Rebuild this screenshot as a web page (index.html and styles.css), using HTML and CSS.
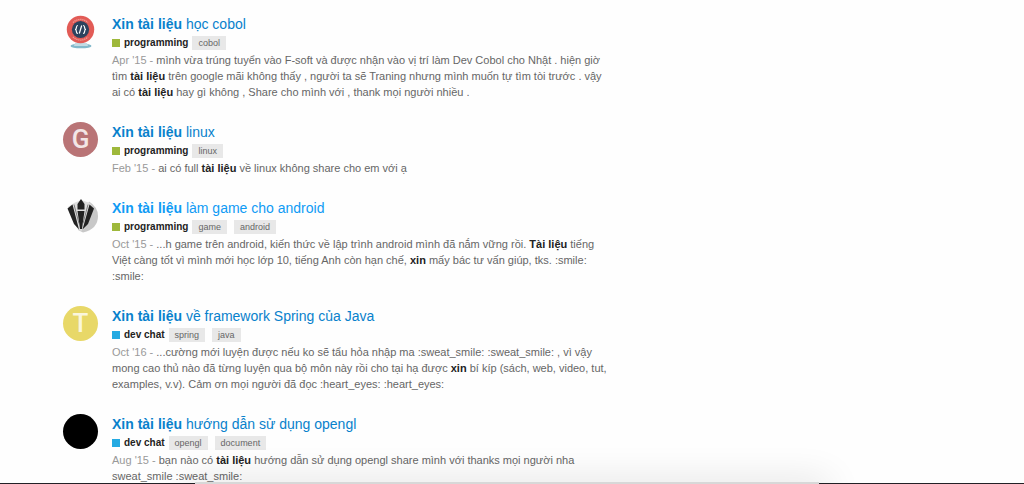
FILE: index.html
```html
<!DOCTYPE html>
<html lang="vi">
  <head>
    <meta charset="UTF-8" />
    <meta name="viewport" content="width=device-width, initial-scale=1.0" />
    <title>Xin tài liệu</title>
    <link rel="stylesheet" href="styles.css">
  </head>
  <body>
    <main class="results">
      <article class="result">
        <a class="avatar" href="#" aria-label="avatar">
          <svg viewBox="0 0 35 35">
            <ellipse cx="18" cy="32" rx="10.5" ry="2.3" fill="#83b9cb" />
            <path d="M12 29h12l1 3H11z" fill="#c3dbe3" />
            <circle cx="17.5" cy="15.5" r="13.7" fill="#e25b56" />
            <path d="M10 8.500a10.800 10.800 0 0 1 15 0M10 23a10.800 10.800 0 0 0 15 0" fill="none" stroke="#f0a09a" stroke-width="1.3" stroke-dasharray="1.2 .8" />
            <circle cx="17.5" cy="15.5" r="8.6" fill="#2c435e" />
            <path d="M15 11.5q-1.6 0-1.6 2t-1.4 2q1.4 0 1.4 2t1.6 2M20 11.5q1.6 0 1.6 2t1.4 2q-1.4 0-1.4 2t-1.6 2M18.7 11.5l-2.4 8" fill="none" stroke="#fff" stroke-width="1.2" />
          </svg>
        </a>
        <div class="content">
          <h2 class="title"><a href="#"><b>Xin tài liệu</b> học cobol</a></h2>
          <div class="meta">
            <a class="category" href="#">programming</a>
            <a class="tag" href="#">cobol</a>
          </div>
          <p class="excerpt"><time>Apr '15 -</time> mình vừa trúng tuyển vào F-soft và được nhận vào vị trí làm Dev Cobol cho Nhật . hiện giờ tìm <b>tài liệu</b> trên google mãi không thấy , người ta sẽ Traning nhưng mình muốn tự tìm tòi trước . vậy ai có <b>tài liệu</b> hay gì không , Share cho mình với , thank mọi người nhiều .</p>
        </div>
      </article>

      <article class="result">
        <a class="avatar letter rose" href="#">G</a>
        <div class="content">
          <h2 class="title"><a href="#"><b>Xin tài liệu</b> linux</a></h2>
          <div class="meta">
            <a class="category" href="#">programming</a>
            <a class="tag" href="#">linux</a>
          </div>
          <p class="excerpt"><time>Feb '15 -</time> ai có full <b>tài liệu</b> về linux không share cho em với ạ</p>
        </div>
      </article>

      <article class="result">
        <a class="avatar" href="#" aria-label="avatar">
          <svg viewBox="0 0 35 35">
            <path d="M26 3.500Q35 9 35 18Q35 31 20 34.500L15 32z" fill="#c8c8c8" />
            <path d="M5 9l6-4 7-3 9 3 3 5-8 20-4 3-4-3z" fill="#dedede" />
            <path d="M18 1l3.500 5v5.500h-7V6zM14.500 13h7L19 31h-2z" fill="#222" />
            <path d="M4.500 10.500L9.500 6.500l6.500 25L11 26zM31 10.500L26.500 6.500l-7 25 5.500-5.500z" fill="#222" />
            <path d="M11 6.500l5 19M25 6.500l-5 19" stroke="#666" stroke-width=".8" />
          </svg>
        </a>
        <div class="content">
          <h2 class="title active"><a href="#"><b>Xin tài liệu</b> làm game cho android</a></h2>
          <div class="meta">
            <a class="category" href="#">programming</a>
            <a class="tag" href="#">game</a>
            <a class="tag" href="#">android</a>
          </div>
          <p class="excerpt"><time>Oct '15 -</time> ...h game trên android, kiến thức về lập trình android mình đã nắm vững rồi. <b>Tài liệu</b> tiếng Việt càng tốt vì mình mới học lớp 10, tiếng Anh còn hạn chế, <b>xin</b> mấy bác tư vấn giúp, tks. :smile: :smile:</p>
        </div>
      </article>

      <article class="result">
        <a class="avatar letter yellow" href="#">T</a>
        <div class="content">
          <h2 class="title"><a href="#"><b>Xin tài liệu</b> về framework Spring của Java</a></h2>
          <div class="meta">
            <a class="category chat" href="#">dev chat</a>
            <a class="tag" href="#">spring</a>
            <a class="tag" href="#">java</a>
          </div>
          <p class="excerpt"><time>Oct '16 -</time> ...cường mới luyện được nếu ko sẽ tẩu hỏa nhập ma :sweat_smile: :sweat_smile: , vì vậy mong cao thủ nào đã từng luyện qua bộ môn này rồi cho tại hạ được <b>xin</b> bí kíp (sách, web, video, tut, examples, v.v). Cảm ơn mọi người đã đọc :heart_eyes: :heart_eyes:</p>
        </div>
      </article>

      <article class="result">
        <a class="avatar black" href="#" aria-label="avatar"></a>
        <div class="content">
          <h2 class="title"><a href="#"><b>Xin tài liệu</b> hướng dẫn sử dụng opengl</a></h2>
          <div class="meta">
            <a class="category chat" href="#">dev chat</a>
            <a class="tag" href="#">opengl</a>
            <a class="tag" href="#">document</a>
          </div>
          <p class="excerpt"><time>Aug '15 -</time> bạn nào có <b>tài liệu</b> hướng dẫn sử dụng opengl share mình với thanks mọi người nha sweat_smile :sweat_smile:</p>
        </div>
      </article>
    </main>

    <div class="bottom-edge"><div class="dock"></div></div>
  </body>
</html>
```

FILE: styles.css
```css
body {
  margin: 0;
  height: 100vh;
  overflow: hidden;
  background: #fefefe;
  color: #666;
  font-family: "Liberation Sans", Arial, sans-serif;
}

a {
  color: inherit;
  text-decoration: none;
}

.results {
  display: flex;
  flex-direction: column;
  gap: 22px;
  max-width: 550px;
  padding: 14px 0 0 63px;
}

.result {
  display: flex;
  gap: 14px;
}

.content {
  flex: 1;
  min-width: 0;
}

/* avatars */
.avatar {
  flex: none;
  width: 35px;
  height: 35px;
  border-radius: 50%;
}

.avatar svg {
  display: block;
}

.letter {
  color: #f3e6e6;
  font: 500 26px/35px Roboto, sans-serif;
  text-align: center;
}

.rose {
  background: #b97476;
}

.yellow {
  background: #e8d868;
  color: #faf6dc;
}

.black {
  background: #000;
}

.title {
  margin: 0 0 2px;
  color: #0881cc;
  font-size: 14px;
  font-weight: normal;
  line-height: 20px;
}

.title.active {
  color: #0f9bf5;
}

.meta {
  display: flex;
  align-items: center;
  gap: 4px;
  height: 14px;
  margin-bottom: 2px;
  font-size: 10px;
  line-height: 14px;
}

.category {
  display: flex;
  align-items: center;
  gap: 4px;
  color: #222;
  font-weight: bold;
}

.category::before {
  content: "";
  width: 8px;
  height: 8px;
  background: #9eb83b;
}

.category.chat::before {
  background: #25aae2;
}

.tag {
  padding: 0 6px;
  background: #e8e8e8;
  font-size: 9px;
}

.tag + .tag {
  margin-left: 3px;
}

.excerpt {
  margin: 0;
  font-size: 11px;
  line-height: 16px;
}

.excerpt time {
  color: #999;
}

.excerpt b {
  color: #222;
}

/* screen edge with the dock peeking out */
.bottom-edge {
  position: fixed;
  left: 0;
  right: 0;
  bottom: 0;
  height: 1px;
  background: #222126;
}

.dock {
  width: 61%;
  height: 2px;
  margin: -1px auto 0 19%;
  background: #d8d8d8;
  box-shadow: 0 8px 36px 10px rgba(0, 0, 0, 0.12);
}
```
